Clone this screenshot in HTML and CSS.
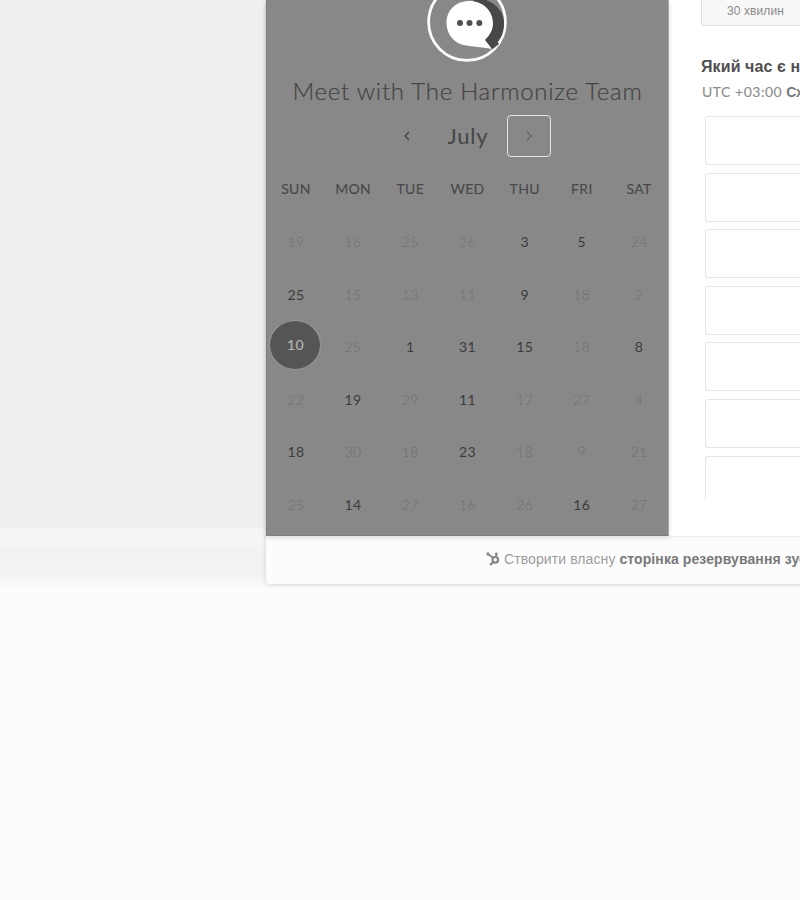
FILE: index.html
```html
<!DOCTYPE html>
<html lang="uk">
<head>
<meta charset="utf-8">
<title>Meet with The Harmonize Team</title>
<link rel="stylesheet" href="styles.css">
</head>
<body>
<main class="card">
  <div class="content">
    <section class="calendar">
      <svg class="avatar" width="80" height="62" viewBox="0 0 80 62">
        <circle cx="40" cy="22" r="38.4" fill="none" stroke="#fafafa" stroke-width="2.8"/>
        <path d="M46 0H59C71 4 77 14 77 23C77 31 75 37 70.500 42L72 44L65 49.500L57 41L62 30Z" fill="#484848"/>
        <path d="M42.500 1C56 1 66 11 66 23C66 30 63 35 58 40L65 49C54 47 45 46.500 39 45.500C27 44 19.500 34 19.500 23C19.500 10 29 1 42.500 1Z" fill="#fff"/>
        <circle cx="33" cy="23" r="3" fill="#505050"/>
        <circle cx="42.500" cy="23" r="3" fill="#505050"/>
        <circle cx="52.300" cy="23" r="3" fill="#505050"/>
      </svg>
      <h1 class="title">Meet with The Harmonize Team</h1>
      <div class="month">
        <button class="arrow"><svg width="8" height="10" viewBox="0 0 8 10"><path d="M6 1L2 5L6 9" /></svg></button>
        <span class="name">July</span>
        <button class="arrow next"><svg width="8" height="10" viewBox="0 0 8 10"><path d="M2 1L6 5L2 9" /></svg></button>
      </div>
      <div class="weekdays"><span>SUN</span><span>MON</span><span>TUE</span><span>WED</span><span>THU</span><span>FRI</span><span>SAT</span></div>
      <div class="days">
        <span>19</span><span>16</span><span>25</span><span>26</span><span class="open">3</span><span class="open">5</span><span>24</span>
        <span class="open">25</span><span>15</span><span>13</span><span>11</span><span class="open">9</span><span>18</span><span>2</span>
        <span class="selected"><b>10</b></span><span>25</span><span class="open">1</span><span class="open">31</span><span class="open">15</span><span>18</span><span class="open">8</span>
        <span>22</span><span class="open">19</span><span>29</span><span class="open">11</span><span>17</span><span>27</span><span>4</span>
        <span class="open">18</span><span>30</span><span>18</span><span class="open">23</span><span>18</span><span>9</span><span>21</span>
        <span>25</span><span class="open">14</span><span>27</span><span>16</span><span>26</span><span class="open">16</span><span>27</span>
      </div>
    </section>
    <section class="times">
      <div class="duration">30 хвилин</div>
      <h2 class="question">Який час є н</h2>
      <p class="zone">UTC +03:00 <b>Сх</b></p>
      <div class="slots"><div class="slot"></div><div class="slot"></div><div class="slot"></div><div class="slot"></div><div class="slot"></div><div class="slot"></div><div class="slot"></div></div>
    </section>
  </div>
  <footer class="footer">
    <svg class="sprocket" width="14" height="14" viewBox="0 0 14 14" fill="none" stroke="#858585">
      <circle cx="9.300" cy="7.800" r="2.800" stroke-width="2.200"/>
      <path d="M2 2L7.300 5.900M10.200 5V2.500M7.300 10L5 12.200" stroke-width="1.900"/>
      <g fill="#858585" stroke="none"><circle cx="1.900" cy="1.900" r="1.600"/><circle cx="10.300" cy="2" r="1.400"/><circle cx="4.800" cy="12.200" r="1.200"/></g>
    </svg>
    <span>Створити власну <b>сторінка резервування зус</b></span>
  </footer>
</main>
</body>
</html>
```
FILE: styles.css
```css
* { box-sizing: border-box; }
html { background: #fcfcfc; }
body {
  margin: 0;
  height: 900px;
  overflow: hidden;
  background: linear-gradient(#efefef 0 526px, #f5f5f5 530px, #f5f5f5 541px, #f2f2f2 550px, #f2f2f2 574px, #fcfcfc 588px);
  font-family: "Liberation Sans", sans-serif;
}
.card {
  width: 544px;
  height: 584px;
  margin-left: 266px;
  background: #fff;
  border-radius: 0 0 0 4px;
  box-shadow: 0 1px 4px rgba(0, 0, 0, .15);
}
.content { display: flex; height: 537px; }
.calendar {
  display: flex;
  flex: none;
  flex-direction: column;
  align-items: center;
  width: 403px;
  height: 536px;
  background: #888;
  border: 1px solid #7f7f7f;
  border-top: 0;
  border-right-color: #aaa;
  box-shadow: 0 2px 5px rgba(0, 0, 0, .14);
  font-family: Lato, sans-serif;
  color: #484848;
  z-index: 1;
}
.avatar { flex: none; margin-left: -1px; }
.title {
  margin: 13px 0 0;
  height: 32px;
  font-size: 24px;
  font-weight: 300;
  line-height: 32px;
  letter-spacing: .73px;
  white-space: nowrap;
  color: #444;
  -webkit-text-stroke: .2px #444;
}
.month { display: flex; align-items: center; margin-top: 7px; height: 43px; margin-left: 1px; }
.arrow {
  display: flex;
  align-items: center;
  justify-content: center;
  width: 44px;
  height: 42px;
  padding: 0;
  border: 1.5px solid transparent;
  border-radius: 4px;
  background: none;
}
.arrow path { fill: none; stroke: #444; stroke-width: 1.5; }
.next { border-color: #e6e6e6; }
.next path { stroke: #666; }
.name { width: 78px; text-align: center; font-size: 22px; letter-spacing: .8px; color: #464646; }
.weekdays, .days { display: grid; grid-template-columns: repeat(7, 57.2px); text-align: center; }
.weekdays { margin-top: 21px; height: 22px; line-height: 22px; font-size: 14px; letter-spacing: .3px; -webkit-text-stroke: .1px #424242; }
.days { margin-top: 15px; grid-auto-rows: 52.6px; font-size: 14px; line-height: 53px; letter-spacing: .4px; font-weight: 300; color: #707070; }
.open { font-weight: 400; color: #3c3c3c; }
.selected { display: flex; align-items: center; justify-content: center; }
.selected b {
  width: 52px;
  height: 50px;
  margin: -2px 1px 0 0;
  border: 1px solid #999;
  border-radius: 50%;
  background: #555;
  color: #b4b4b4;
  font-weight: 400;
  -webkit-text-stroke: .2px;
  line-height: 47px;
}
.times { display: flex; flex-direction: column; flex: 1; min-width: 0; padding-left: 32px; border-bottom: 1px solid #ececec; }
.duration {
  width: 109px;
  height: 26px;
  padding-left: 25px;
  border: 1px solid #e0e0e0;
  border-width: 0 0 1px 1px;
  border-radius: 0 0 0 3px;
  background: #f8f8f8;
  font-size: 12px;
  line-height: 22px;
  letter-spacing: .1px;
  color: #8a8a8a;
}
.question { margin: 29px 0 0; font-size: 16px; line-height: 24px; letter-spacing: .1px; white-space: nowrap; color: #505050; }
.zone { margin: 3px 0 0 1px; font: 14px/20px Lato, sans-serif; letter-spacing: .5px; white-space: nowrap; color: #8c8c8c; -webkit-text-stroke: .1px; }
.zone b { font: bold 14px "Liberation Sans", sans-serif; letter-spacing: -.3px; color: #777; -webkit-text-stroke: 0; }
.slots { display: flex; flex-direction: column; gap: 7.6px; height: 383px; margin: 14px 0 0 4px; overflow: hidden; }
.slot { flex: none; height: 49px; border: 1px solid #e6e6e6; border-right: 0; border-radius: 3px 0 0 3px; background: #fff; }
.footer {
  display: flex;
  align-items: center;
  height: 47px;
  padding: 0 0 3px 220px;
  border-radius: 0 0 0 4px;
  background: #fcfcfc;
  font-size: 14px;
  letter-spacing: .09px;
  white-space: nowrap;
  color: #9c9c9c;
}
.sprocket { flex: none; margin-right: 4px; }
.footer b { color: #787878; }
```
